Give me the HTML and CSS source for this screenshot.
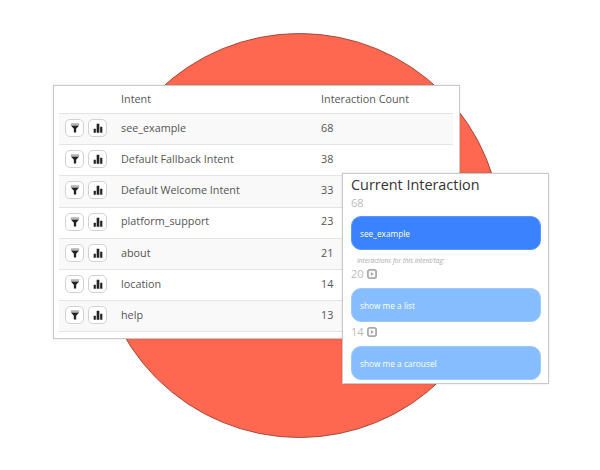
FILE: index.html
```html
<!DOCTYPE html>
<html lang="en">
<head>
<meta charset="utf-8">
<title>Interactions</title>
<link rel="stylesheet" href="styles.css">
</head>
<body>
<svg width="0" height="0" class="defs">
  <symbol id="funnel" viewBox="0 0 12 12"><path d="M1 .5h10v1.6H1z" opacity=".45"/><path d="M1 3h10L7.4 6.8V11.5H4.6V6.8z"/></symbol>
  <symbol id="bars" viewBox="0 0 12 12"><path d="M.8 7h2.6v4.6H.8zM4.4 1h3.2v10.6H4.4zM8.6 4.4h2.6v7.2H8.6z"/></symbol>
  <symbol id="play" viewBox="0 0 10 10"><rect x=".9" y=".9" width="8.2" height="8.2" rx="1.8" fill="none" stroke="currentColor" stroke-width="1.8"/><path d="M3.8 2.9 7 5 3.8 7.1z" fill="currentColor"/></symbol>
</svg>
<main class="stage">
  <div class="circle"></div>
  <section class="card table-card">
    <div class="row head"><span class="actions"></span><span class="name">Intent</span><span class="count">Interaction Count</span></div>
    <div class="row odd"><span class="actions"><button class="btn"><svg class="ico"><use href="#funnel"/></svg></button><button class="btn"><svg class="ico"><use href="#bars"/></svg></button></span><span class="name">see_example</span><span class="count">68</span></div>
    <div class="row"><span class="actions"><button class="btn"><svg class="ico"><use href="#funnel"/></svg></button><button class="btn"><svg class="ico"><use href="#bars"/></svg></button></span><span class="name">Default Fallback Intent</span><span class="count">38</span></div>
    <div class="row odd"><span class="actions"><button class="btn"><svg class="ico"><use href="#funnel"/></svg></button><button class="btn"><svg class="ico"><use href="#bars"/></svg></button></span><span class="name">Default Welcome Intent</span><span class="count">33</span></div>
    <div class="row"><span class="actions"><button class="btn"><svg class="ico"><use href="#funnel"/></svg></button><button class="btn"><svg class="ico"><use href="#bars"/></svg></button></span><span class="name">platform_support</span><span class="count">23</span></div>
    <div class="row odd"><span class="actions"><button class="btn"><svg class="ico"><use href="#funnel"/></svg></button><button class="btn"><svg class="ico"><use href="#bars"/></svg></button></span><span class="name">about</span><span class="count">21</span></div>
    <div class="row"><span class="actions"><button class="btn"><svg class="ico"><use href="#funnel"/></svg></button><button class="btn"><svg class="ico"><use href="#bars"/></svg></button></span><span class="name">location</span><span class="count">14</span></div>
    <div class="row odd"><span class="actions"><button class="btn"><svg class="ico"><use href="#funnel"/></svg></button><button class="btn"><svg class="ico"><use href="#bars"/></svg></button></span><span class="name">help</span><span class="count">13</span></div>
  </section>
  <section class="card detail-card">
    <h2 class="title">Current Interaction</h2>
    <div class="num top">68</div>
    <div class="bubble primary">see_example</div>
    <div class="note">Interactions for this intent/tag:</div>
    <div class="num step">20 <svg class="play"><use href="#play"/></svg></div>
    <div class="bubble">show me a list</div>
    <div class="num step gap">14 <svg class="play"><use href="#play"/></svg></div>
    <div class="bubble">show me a carousel</div>
  </section>
</main>
</body>
</html>
```

FILE: styles.css
```css
* { box-sizing: border-box; }
html, body { margin: 0; padding: 0; background: #fff; }
body { font-family: "Open Sans", "Liberation Sans", sans-serif; color: #555; overflow: hidden; }
.defs { position: absolute; }
.stage { position: relative; width: 600px; height: 470px; }
.circle {
  position: absolute; left: 97px; top: 33px; width: 405px; height: 405px;
  border-radius: 50%; background: #ff6850; border: 1px solid #a8483a;
}
.card { position: absolute; background: #fff; border: 1px solid #c9c9c9; box-shadow: 0 0 2px rgba(0,0,0,.12); }
.table-card { left: 53px; top: 85px; width: 407px; height: 254px; padding: 0 6px 0 5px; }
.row { display: flex; align-items: center; height: 31.2px; border-bottom: 1px solid #e4e4e4; font-size: 10.8px; padding-bottom: 2px; }
.row.head { height: 28px; padding-bottom: 1px; }
.row.odd { background: #f9f9f9; }
.actions { display: flex; gap: 4px; width: 62px; padding-left: 6px; }
.name { width: 200px; margin-bottom: 1.4px; }
.count { margin-bottom: 1.4px; }
.btn {
  width: 19px; height: 18px; padding: 0; background: #fff; border: 1px solid #d2d2d2; border-radius: 5px;
  display: flex; align-items: center; justify-content: center;
}
.ico { width: 10px; height: 10px; fill: #222; }
.detail-card { left: 342px; top: 173px; width: 207px; height: 211px; padding: 0 7px 0 8px; }
.title { margin: 0; font-size: 14.4px; font-weight: 400; line-height: 21px; color: #333; height: 21px; }
.num { font-size: 11px; color: #bbb; display: flex; align-items: center; gap: 3px; line-height: 16px; }
.num.top { margin-bottom: 5px; height: 16px; margin-top: 0; }
.play { width: 10px; height: 10px; color: #aaa; }
.bubble {
  height: 34px; border-radius: 10px; background: #85bdff; color: #fff; font-size: 8.3px;
  display: flex; align-items: center; padding-left: 8px; border: 1px solid #9cc9ff;
}
.bubble.primary { background: #3a82ff; border-color: #5c97ff; }
.note { font-size: 6.5px; font-style: italic; color: #aaa; margin: 5px 0 0 6px; line-height: 11px; height: 11px; }
.num.step { margin-top: 0; margin-bottom: 6px; height: 16px; }
.num.gap { margin-top: 2px; margin-bottom: 6px; }
```
